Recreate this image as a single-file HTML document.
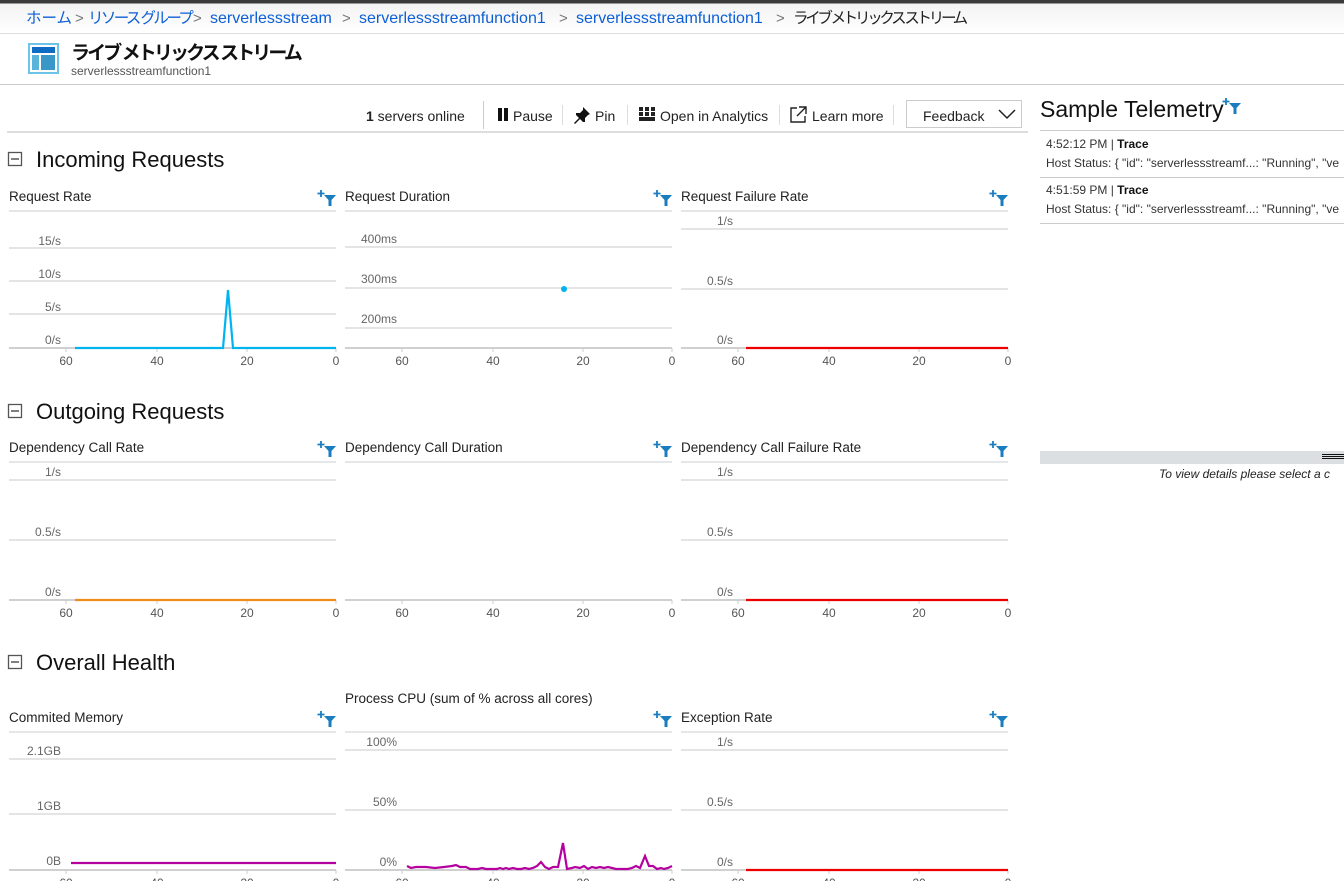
<!DOCTYPE html>
<html><head><meta charset="utf-8"><style>
body{margin:0;width:1344px;height:881px;overflow:hidden;background:#fff;font-family:"Liberation Sans","Noto Sans CJK JP",sans-serif;position:relative}
.a{position:absolute;white-space:nowrap}
.b{position:absolute;white-space:nowrap;top:9px;height:20px;line-height:20px;font-size:16px;color:#0d5fd6}
.s{position:absolute;top:9px;height:20px;line-height:20px;font-size:15px;color:#777}
</style></head><body>
<div class="a" style="left:0;top:0;width:1344px;height:33px;background:linear-gradient(#3a3a3a 0,#3a3a3a 3px,#f3f3f3 4px,#fff 33px);border-bottom:1px solid #ddd"></div>
<div class="b" style="left:26px;font-size:15.5px">ホーム</div><div class="s" style="left:75px">&gt;</div>
<div class="b" style="left:88px;font-size:15.5px;letter-spacing:-2.6px">リソース グループ</div><div class="s" style="left:193px">&gt;</div>
<div class="b" style="left:210px">serverlessstream</div><div class="s" style="left:342px">&gt;</div>
<div class="b" style="left:359px">serverlessstreamfunction1</div><div class="s" style="left:559px">&gt;</div>
<div class="b" style="left:576px">serverlessstreamfunction1</div><div class="s" style="left:776px">&gt;</div>
<div class="b" style="left:793px;font-size:15.5px;letter-spacing:-3.3px;color:#222">ライブ メトリックス ストリーム</div>
<svg class="a" style="left:28px;top:43px" width="31" height="31"><rect x="0" y="0" width="31" height="31" fill="#6ec3e8"/><rect x="2" y="2" width="27" height="27" fill="#fff"/><rect x="4" y="4" width="23" height="6" fill="#0e6cc4"/><rect x="4" y="12" width="7" height="15" fill="#59b4d9"/><rect x="13" y="12" width="14" height="15" fill="#3998c8"/></svg>
<div class="a" style="left:71px;top:38px;font-size:19px;font-weight:bold;color:#111;letter-spacing:-2.9px">ライブ メトリックス ストリーム</div>
<div class="a" style="left:71px;top:64px;font-size:12px;color:#555">serverlessstreamfunction1</div>
<div class="a" style="left:0;top:84px;width:1344px;height:1px;background:#ccc"></div>
<div class="a" style="left:366px;top:108px;font-size:14px;color:#222"><b>1</b> servers online</div>
<div class="a" style="left:483px;top:101px;width:1px;height:28px;background:#ccc"></div>
<div class="a" style="left:498px;top:108px;width:4px;height:13px;background:#111"></div><div class="a" style="left:504px;top:108px;width:4px;height:13px;background:#111"></div>
<div class="a" style="left:513px;top:108px;font-size:14px;color:#222">Pause</div>
<div class="a" style="left:562px;top:105px;width:1px;height:20px;background:#ddd"></div>
<svg class="a" style="left:573px;top:106px" width="18" height="18"><path d="M10 1l7 7-2 1-3 3 0 4-2 0-3-3-5 5-1-1 5-5-3-3 0-2 4 0 3-3z" fill="#111"/></svg>
<div class="a" style="left:595px;top:108px;font-size:14px;color:#222">Pin</div>
<div class="a" style="left:627px;top:105px;width:1px;height:20px;background:#ddd"></div>
<svg class="a" style="left:639px;top:107px" width="17" height="15"><g fill="#222"><rect x="0" y="0" width="4" height="4"/><rect x="6" y="0" width="4" height="4"/><rect x="12" y="0" width="4" height="4"/><rect x="0" y="5" width="4" height="4"/><rect x="6" y="5" width="4" height="4"/><rect x="12" y="5" width="4" height="4"/><rect x="0" y="10" width="16" height="4"/></g></svg>
<div class="a" style="left:660px;top:108px;font-size:14px;color:#222">Open in Analytics</div>
<div class="a" style="left:779px;top:105px;width:1px;height:20px;background:#ddd"></div>
<svg class="a" style="left:790px;top:106px" width="17" height="17"><path d="M7 2H1v14h14v-6" fill="none" stroke="#222" stroke-width="1.4"/><path d="M9 1h7v7M16 1L7 10" fill="none" stroke="#222" stroke-width="1.4"/></svg>
<div class="a" style="left:812px;top:108px;font-size:14px;color:#222">Learn more</div>
<div class="a" style="left:893px;top:105px;width:1px;height:20px;background:#ddd"></div>
<div class="a" style="left:906px;top:100px;width:116px;height:28px;border:1px solid #ccc;box-sizing:border-box"></div>
<div class="a" style="left:923px;top:108px;font-size:14px;color:#222">Feedback</div>
<svg class="a" style="left:998px;top:108px" width="18" height="12"><path d="M1 2l8 8 8-8" fill="none" stroke="#222" stroke-width="1.5"/></svg>
<div class="a" style="left:7px;top:131px;width:1021px;height:2px;background:#ddd"></div>
<div class="a" style="left:1040px;top:96px;font-size:23px;color:#111">Sample Telemetry</div>
<svg class="a" style="left:1222px;top:97px" width="22" height="22"><path d="M4 1v7M0.5 4.5h7" stroke="#1a7dc0" stroke-width="1.8"/><path d="M7 6h12l-4.5 5v6h-3v-6z" fill="#1a7dc0"/></svg>
<div class="a" style="left:1040px;top:130px;width:304px;height:1px;background:#ccc"></div>
<div class="a" style="left:1046px;top:137px;font-size:12px;color:#333">4:52:12 PM | <b style="color:#111">Trace</b></div>
<div class="a" style="left:1046px;top:156px;font-size:12px;color:#333">Host Status: { "id": "serverlessstreamf...: "Running", "ve</div>
<div class="a" style="left:1040px;top:177px;width:304px;height:1px;background:#ccc"></div>
<div class="a" style="left:1046px;top:183px;font-size:12px;color:#333">4:51:59 PM | <b style="color:#111">Trace</b></div>
<div class="a" style="left:1046px;top:202px;font-size:12px;color:#333">Host Status: { "id": "serverlessstreamf...: "Running", "ve</div>
<div class="a" style="left:1040px;top:223px;width:304px;height:1px;background:#ccc"></div>
<div class="a" style="left:1040px;top:451px;width:304px;height:13px;background:#dcdfe2"></div>
<div class="a" style="left:1322px;top:454px;width:22px;height:1px;background:#111"></div>
<div class="a" style="left:1322px;top:456px;width:22px;height:1px;background:#111"></div>
<div class="a" style="left:1322px;top:458px;width:22px;height:1px;background:#111"></div>
<div class="a" style="left:1159px;top:467px;font-size:12px;font-style:italic;color:#222">To view details please select a c</div>
<svg class="a" style="left:0;top:0" width="1030" height="881" font-family="Liberation Sans, sans-serif">
<defs>
<g id="flt"><path d="M-8 -8v7M-11.5 -4.5h7" stroke="#1a7dc0" stroke-width="1.8"/><path d="M-5 -3h12l-4.5 5v6h-3v-6z" fill="#1a7dc0"/></g>
<g id="ax" font-size="12" fill="#555" text-anchor="middle"><line x1="0" y1="0" x2="327" y2="0" stroke="#d0d0d0" stroke-width="2"/><line x1="57" y1="0" x2="57" y2="4" stroke="#ccc"/><line x1="148" y1="0" x2="148" y2="4" stroke="#ccc"/><line x1="238" y1="0" x2="238" y2="4" stroke="#ccc"/><line x1="327" y1="0" x2="327" y2="4" stroke="#ccc"/><text x="57" y="17">60</text><text x="148" y="17">40</text><text x="238" y="17">20</text><text x="327" y="17">0</text></g>
</defs>
<g font-size="22" fill="#111"><text x="36" y="167">Incoming Requests</text><text x="36" y="419">Outgoing Requests</text><text x="36" y="670">Overall Health</text></g>
<g fill="none" stroke="#555" stroke-width="1.3"><rect x="8.5" y="152.5" width="13" height="13"/><rect x="8.5" y="404.5" width="13" height="13"/><rect x="8.5" y="655.5" width="13" height="13"/></g>
<g stroke="#555" stroke-width="1.5"><line x1="11" y1="159" x2="19" y2="159"/><line x1="11" y1="411" x2="19" y2="411"/><line x1="11" y1="662" x2="19" y2="662"/></g>
<g font-size="13.5" fill="#222"><text x="9" y="201">Request Rate</text><text x="345" y="201">Request Duration</text><text x="681" y="201">Request Failure Rate</text>
<text x="9" y="452">Dependency Call Rate</text><text x="345" y="452">Dependency Call Duration</text><text x="681" y="452">Dependency Call Failure Rate</text>
<text x="9" y="722">Commited Memory</text><text x="345" y="703">Process CPU (sum of % across all cores)</text><text x="681" y="722">Exception Rate</text></g>
<use href="#flt" x="329" y="198"/><use href="#flt" x="665" y="198"/><use href="#flt" x="1001" y="198"/>
<use href="#flt" x="329" y="449"/><use href="#flt" x="665" y="449"/><use href="#flt" x="1001" y="449"/>
<use href="#flt" x="329" y="719"/><use href="#flt" x="665" y="719"/><use href="#flt" x="1001" y="719"/>
<g stroke="#ddd" stroke-width="1.5"><line x1="9" y1="211" x2="336" y2="211"/><line x1="345" y1="211" x2="672" y2="211"/><line x1="681" y1="211" x2="1008" y2="211"/>
<line x1="9" y1="462" x2="336" y2="462"/><line x1="345" y1="462" x2="672" y2="462"/><line x1="681" y1="462" x2="1008" y2="462"/>
<line x1="9" y1="732" x2="336" y2="732"/><line x1="345" y1="732" x2="672" y2="732"/><line x1="681" y1="732" x2="1008" y2="732"/></g>
<g stroke="#d4d4d4" stroke-width="1.3">
<line x1="9" y1="248" x2="336" y2="248"/><line x1="9" y1="281" x2="336" y2="281"/><line x1="9" y1="314" x2="336" y2="314"/>
<line x1="345" y1="247" x2="672" y2="247"/><line x1="345" y1="288" x2="672" y2="288"/><line x1="345" y1="328" x2="672" y2="328"/>
<line x1="681" y1="229" x2="1008" y2="229"/><line x1="681" y1="289" x2="1008" y2="289"/>
<line x1="9" y1="480" x2="336" y2="480"/><line x1="9" y1="540" x2="336" y2="540"/>
<line x1="681" y1="480" x2="1008" y2="480"/><line x1="681" y1="540" x2="1008" y2="540"/>
<line x1="9" y1="759" x2="336" y2="759"/><line x1="9" y1="814" x2="336" y2="814"/>
<line x1="345" y1="750" x2="672" y2="750"/><line x1="345" y1="810" x2="672" y2="810"/>
<line x1="681" y1="750" x2="1008" y2="750"/><line x1="681" y1="810" x2="1008" y2="810"/></g>
<use href="#ax" x="9" y="348"/><use href="#ax" x="345" y="348"/><use href="#ax" x="681" y="348"/>
<use href="#ax" x="9" y="600"/><use href="#ax" x="345" y="600"/><use href="#ax" x="681" y="600"/>
<use href="#ax" x="9" y="870"/><use href="#ax" x="345" y="870"/><use href="#ax" x="681" y="870"/>
<g font-size="12" fill="#666" text-anchor="end">
<text x="61" y="245">15/s</text><text x="61" y="278">10/s</text><text x="61" y="311">5/s</text><text x="61" y="344">0/s</text>
<text x="397" y="243">400ms</text><text x="397" y="283">300ms</text><text x="397" y="323">200ms</text>
<text x="733" y="225">1/s</text><text x="733" y="285">0.5/s</text><text x="733" y="344">0/s</text>
<text x="61" y="476">1/s</text><text x="61" y="536">0.5/s</text><text x="61" y="596">0/s</text>
<text x="733" y="476">1/s</text><text x="733" y="536">0.5/s</text><text x="733" y="596">0/s</text>
<text x="61" y="755">2.1GB</text><text x="61" y="810">1GB</text><text x="61" y="865">0B</text>
<text x="397" y="746">100%</text><text x="397" y="806">50%</text><text x="397" y="866">0%</text>
<text x="733" y="746">1/s</text><text x="733" y="806">0.5/s</text><text x="733" y="866">0/s</text></g>
<polyline points="75,348 223,348 228,290 233,348 336,348" fill="none" stroke="#00b4f0" stroke-width="2.2"/>
<circle cx="564" cy="289" r="3" fill="#00b4f0"/>
<line x1="746" y1="348" x2="1008" y2="348" stroke="#e00" stroke-width="2.2"/>
<line x1="75" y1="600" x2="336" y2="600" stroke="#f28c1c" stroke-width="2.2"/>
<line x1="746" y1="600" x2="1008" y2="600" stroke="#e00" stroke-width="2.2"/>
<line x1="71" y1="863" x2="336" y2="863" stroke="#b4009e" stroke-width="2.2"/>
<line x1="746" y1="870" x2="1008" y2="870" stroke="#e00" stroke-width="2.2"/>
<polyline points="407,866 411,868 416,867 426,867 435,868 444,867 452,866 456,865 460,867 466,867 470,869 478,869 482,868 486,869 490,869 497,869 500,868 503,869 506,868 509,869 513,868 517,869 521,869 525,868 529,869 533,868 537,866 541,862 545,867 549,869 553,867 558,867 563,843 567,869 572,868 575,867 580,868 584,866 588,869 592,867 596,868 600,867 604,868 608,867 612,868 616,869 622,869 628,869 632,868 636,866 640,868 645,856 649,866 653,866 657,869 661,868 664,869 668,868 672,866" fill="none" stroke="#b4009e" stroke-width="2.2"/>
</svg>
</body></html>
